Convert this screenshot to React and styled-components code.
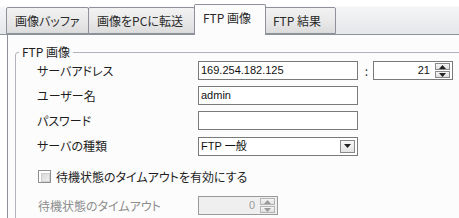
import React from "react";
import styled, { createGlobalStyle } from "styled-components";

const Global = createGlobalStyle`
  html, body { margin: 0; padding: 0; background: #ffffff; }
  body {
    font-family: "Noto Sans CJK JP", "Noto Sans", sans-serif;
    font-size: 12px;
    color: #1e1e1e;
    font-feature-settings: "palt" 1;
  }
  * { box-sizing: border-box; }
`;

const Window = styled.div`
  width: 459px;
  height: 218px;
  overflow: hidden;
  background: #ffffff;
`;

const TabStrip = styled.div`
  height: 35px;
  display: flex;
  align-items: flex-end;
  padding-left: 6px;
  position: relative;
  background: linear-gradient(#ffffff 0, #ffffff 6px, #f4f5f6 7px, #e6e7ea 34px);
  border-bottom: 1px solid #8e9199;
`;

const Tab = styled.div`
  height: ${(p) => (p.$active ? "31px" : "27px")};
  width: ${(p) => p.$w}px;
  margin-left: ${(p) => p.$ml || 0}px;
  margin-bottom: ${(p) => (p.$active ? "-1px" : "0")};
  padding: 5px 0 0 8px;
  border: 1px solid #8e9199;
  border-bottom: ${(p) => (p.$active ? "none" : "1px solid #8e9199")};
  border-radius: 2px 2px 0 0;
  background: ${(p) =>
    p.$active ? "#fcfcfc" : "linear-gradient(#f2f2f2, #e9e9e9 50%, #dcdcdc)"};
  color: #2a2a2a;
  font-size: 12px;
  line-height: 16px;
  white-space: nowrap;
  position: relative;
  z-index: ${(p) => (p.$active ? 2 : 1)};
`;

const Page = styled.div`
  margin-left: 7px;
  height: 183px;
  border-left: 1px solid #8e9199;
  background: #fcfcfc;
  padding: 10px 0 0 7px;
`;

const Group = styled.fieldset`
  margin: 0;
  width: 470px;
  height: 190px;
  border: 1px solid #b0b4ba;
  border-radius: 3px;
  padding: 2px 0 0 21px;
`;

const Legend = styled.legend`
  padding: 0 3px;
  margin-left: -18px;
  font-size: 12px;
  line-height: 14px;
  color: #1e1e1e;
`;

const Form = styled.div`
  display: grid;
  grid-template-columns: 161px 160px 15px 80px;
  grid-template-rows: 19px 19px 19px 19px;
  row-gap: 6px;
  align-items: center;
`;

const Label = styled.div`
  font-size: 12px;
  color: ${(p) => (p.$disabled ? "#8d8d8d" : "#1e1e1e")};
  white-space: nowrap;
`;

const TextBox = styled.div`
  height: 19px;
  margin-top: ${(p) => p.$mt || 0}px;
  border: 1px solid ${(p) => (p.$disabled ? "#9a9a9a" : "#7a7a7a")};
  background: ${(p) => (p.$disabled ? "#efefef" : "#ffffff")};
  font-family: "Liberation Sans", "Noto Sans CJK JP", sans-serif;
  font-size: 11px;
  line-height: 17px;
  padding: 0 2px 0 2px;
  display: flex;
  align-items: center;
  justify-content: ${(p) => (p.$right ? "flex-end" : "flex-start")};
  color: ${(p) => (p.$disabled ? "#9a9a9a" : "#111")};
  position: relative;
`;

const Colon = styled.div`
  text-align: center;
  color: #333;
  font-size: 12px;
  padding-left: 2px;
`;

const SpinBtns = styled.div`
  display: flex;
  flex-direction: column;
  margin-left: 5px;
  width: 15px;
  height: 15px;
  gap: 1px;
`;

const SpinBtn = styled.div`
  flex: 1;
  border: 1px solid ${(p) => (p.$disabled ? "#b5b5b5" : "#8a8a8a")};
  background: linear-gradient(#f6f6f6, #dedede);
  display: flex;
  align-items: center;
  justify-content: center;
`;

const DropBtn = styled.div`
  position: absolute;
  right: 2px;
  top: 2px;
  width: 15px;
  height: 13px;
  border: 1px solid #8a8a8a;
  background: linear-gradient(#f8f8f8, #e4e4e4);
  display: flex;
  align-items: center;
  justify-content: center;
`;

const CheckRow = styled.div`
  display: flex;
  align-items: center;
  height: 19px;
  margin-top: 12px;
  margin-left: 1px;
`;

const CheckBox = styled.div`
  width: 13px;
  height: 13px;
  border: 1px solid #8f8f8f;
  background: #ffffff;
  padding: 2px;
  margin-right: 5px;
  &::after {
    content: "";
    display: block;
    width: 100%;
    height: 100%;
    background: linear-gradient(135deg, #d9d9d9, #f0f0f0);
    border: 1px solid #cfcfcf;
  }
`;

const DisabledRow = styled.div`
  display: grid;
  grid-template-columns: 160px 80px;
  align-items: center;
  height: 19px;
  margin-top: 10px;
  margin-left: 1px;
`;

const Arrow = ({ up, color = "#222" }) => (
  <svg width="7" height="4" viewBox="0 0 7 4">
    {up ? (
      <path d="M0 4 L3.5 0 L7 4 Z" fill={color} />
    ) : (
      <path d="M0 0 L7 0 L3.5 4 Z" fill={color} />
    )}
  </svg>
);

const Spinner = ({ disabled }) => (
  <SpinBtns>
    <SpinBtn $disabled={disabled}>
      <Arrow up color={disabled ? "#9a9a9a" : "#222"} />
    </SpinBtn>
    <SpinBtn $disabled={disabled}>
      <Arrow color={disabled ? "#9a9a9a" : "#222"} />
    </SpinBtn>
  </SpinBtns>
);

export default function App() {
  return (
    <Window>
      <Global />
      <TabStrip>
        <Tab $w={83}>画像バッファ</Tab>
        <Tab $w={107} $ml={-1}>画像をPCに転送</Tab>
        <Tab $w={72} $ml={-1} $active>FTP 画像</Tab>
        <Tab $w={72} $ml={-2}>FTP 結果</Tab>
      </TabStrip>
      <Page>
        <Group>
          <Legend>FTP 画像</Legend>
          <Form>
            <Label>サーバアドレス</Label>
            <TextBox>169.254.182.125</TextBox>
            <Colon>:</Colon>
            <TextBox $right>
              21
              <Spinner />
            </TextBox>

            <Label>ユーザー名</Label>
            <TextBox>admin</TextBox>
            <div />
            <div />

            <Label>パスワード</Label>
            <TextBox />
            <div />
            <div />

            <Label>サーバの種類</Label>
            <TextBox $mt={1}>
              FTP 一般
              <DropBtn>
                <Arrow />
              </DropBtn>
            </TextBox>
            <div />
            <div />
          </Form>
          <CheckRow>
            <CheckBox />
            <Label>待機状態のタイムアウトを有効にする</Label>
          </CheckRow>
          <DisabledRow>
            <Label $disabled>待機状態のタイムアウト</Label>
            <TextBox $right $disabled>
              0
              <Spinner disabled />
            </TextBox>
          </DisabledRow>
        </Group>
      </Page>
    </Window>
  );
}
